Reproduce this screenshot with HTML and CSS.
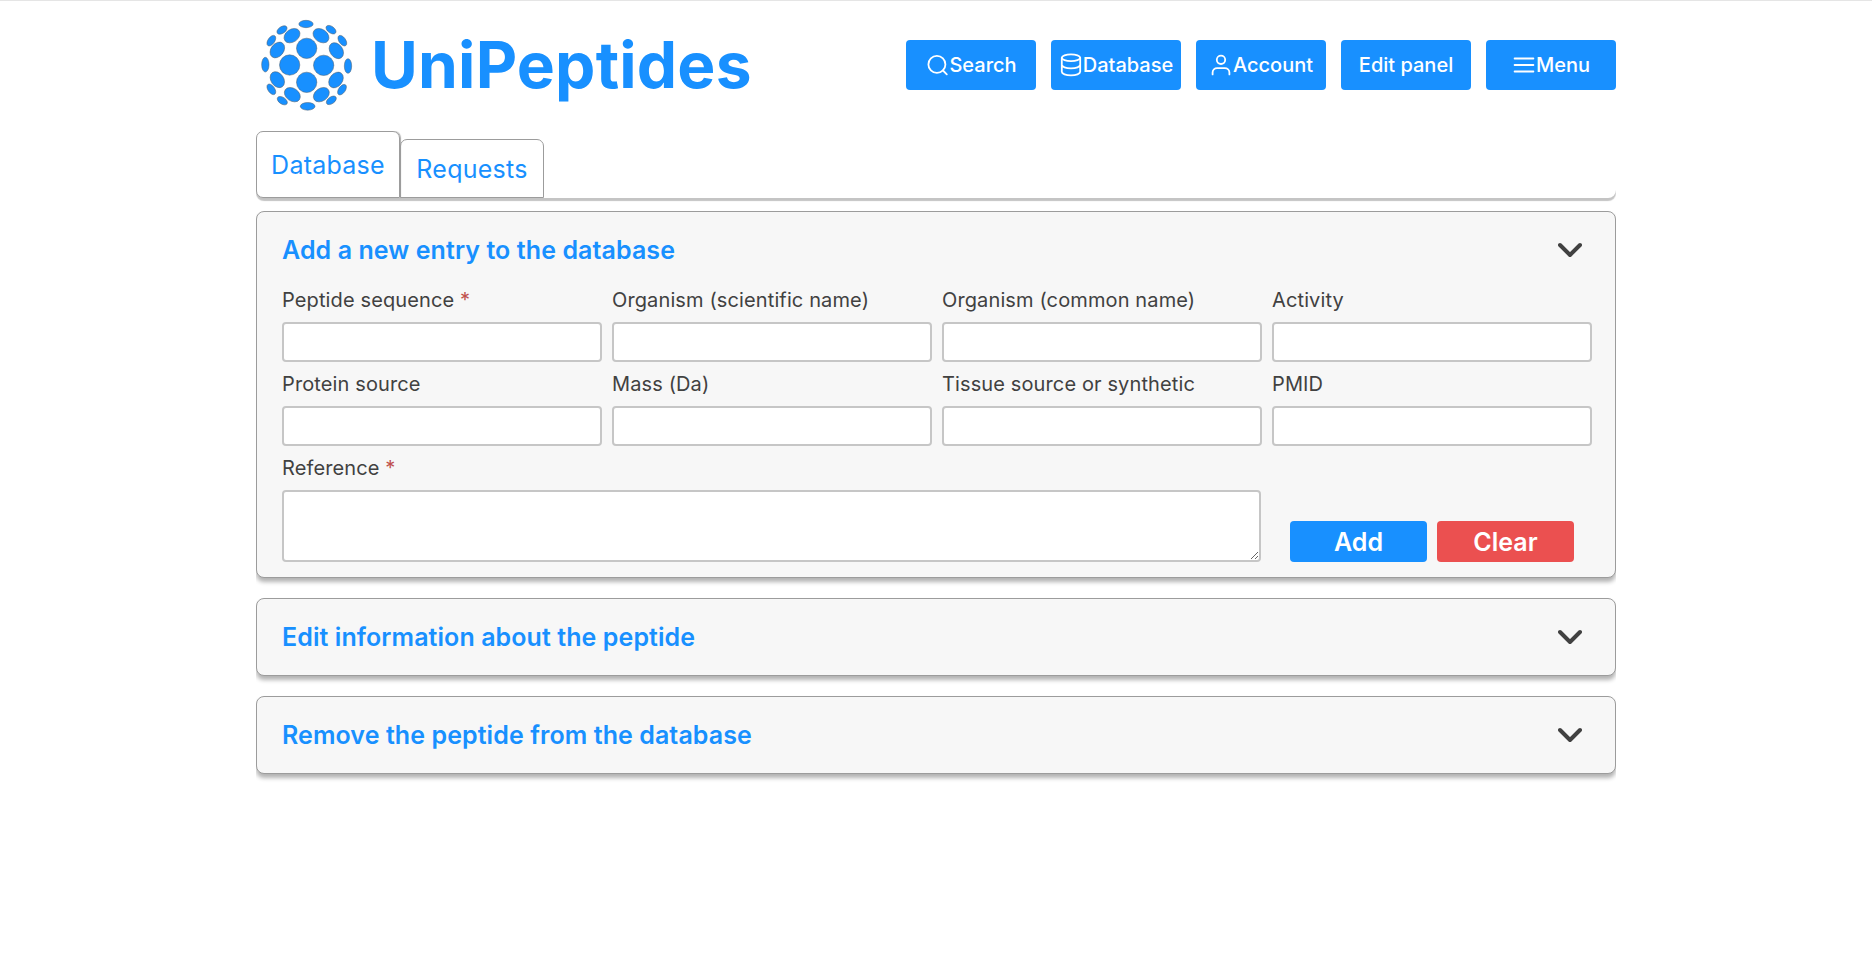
FILE: index.html
```html
<!DOCTYPE html>
<html lang="en">
<head>
<meta charset="utf-8">
<title>UniPeptides</title>
<link rel="stylesheet" href="styles.css">
</head>
<body>
<div class="page">
  <header class="header">
    <div class="brand">
      <svg class="logo" viewBox="18 42 306 306">
        <circle cx="170" cy="145" r="30.5"/><circle cx="119" cy="195" r="30.5"/><circle cx="221" cy="196" r="30.5"/><circle cx="170" cy="247" r="30.5"/>
        <ellipse cx="126" cy="107" rx="26" ry="19" transform="rotate(-35 126 107)"/>
        <ellipse cx="213" cy="107" rx="26" ry="19" transform="rotate(35 213 107)"/>
        <ellipse cx="82" cy="150" rx="26" ry="19" transform="rotate(-52 82 150)"/>
        <ellipse cx="259" cy="152" rx="26" ry="19" transform="rotate(55 259 152)"/>
        <ellipse cx="82" cy="239" rx="26" ry="19" transform="rotate(55 82 239)"/>
        <ellipse cx="127" cy="284" rx="26" ry="19" transform="rotate(35 127 284)"/>
        <ellipse cx="214" cy="284" rx="26" ry="19" transform="rotate(-35 214 284)"/>
        <ellipse cx="258" cy="240" rx="26" ry="19" transform="rotate(-52 258 240)"/>
        <ellipse cx="168" cy="72" rx="21.5" ry="11"/><ellipse cx="173" cy="319" rx="22" ry="11.5"/>
        <ellipse cx="46" cy="194" rx="11" ry="22"/><ellipse cx="294" cy="198" rx="11" ry="22"/>
        <ellipse cx="96" cy="90" rx="17" ry="10" transform="rotate(-34 96 90)"/>
        <ellipse cx="243" cy="89" rx="17" ry="10" transform="rotate(36 243 89)"/>
        <ellipse cx="64" cy="122" rx="18" ry="10" transform="rotate(-55 64 122)"/>
        <ellipse cx="277" cy="122" rx="18" ry="10" transform="rotate(55 277 122)"/>
        <ellipse cx="64" cy="268" rx="18" ry="10" transform="rotate(55 64 268)"/>
        <ellipse cx="97" cy="302" rx="17" ry="10" transform="rotate(34 97 302)"/>
        <ellipse cx="244" cy="301" rx="17" ry="10" transform="rotate(-36 244 301)"/>
        <ellipse cx="276" cy="269" rx="18" ry="10" transform="rotate(-55 276 269)"/>
      </svg>
      <h1 class="brand-name">UniPeptides</h1>
    </div>
    <nav class="nav">
      <button class="nav-button"><svg class="icon" viewBox="0 0 24 24"><circle cx="11.9" cy="11.4" r="8.5"/><path d="M18 17.5 21.8 21.3"/></svg>Search</button>
      <button class="nav-button"><svg class="icon" viewBox="0 0 24 24"><ellipse cx="12" cy="4.8" rx="9.2" ry="3.4"/><path d="M2.8 4.8v14c0 2 4.1 3.5 9.2 3.5s9.2-1.5 9.2-3.5v-14M2.8 11.8c0 2 4.1 3.5 9.2 3.5s9.2-1.5 9.2-3.5"/></svg>Database</button>
      <button class="nav-button"><svg class="icon" viewBox="0 0 24 24"><circle cx="12" cy="6.8" r="4.2"/><path d="M3.6 21.4v-1.8c0-2.6 2-4.4 4.6-4.4h7.6c2.6 0 4.6 1.8 4.6 4.4v1.8"/></svg>Account</button>
      <button class="nav-button">Edit panel</button>
      <button class="nav-button"><svg class="icon" viewBox="0 0 24 24"><path d="M2.6 5.5h18.8M2.6 12h18.8M2.6 18.5h18.8"/></svg>Menu</button>
    </nav>
  </header>

  <div class="tabs-clip">
    <div class="tabs">
      <div class="tab tab-active">Database</div>
      <div class="tab">Requests</div>
    </div>
  </div>

  <main class="panels">
    <section class="panel">
      <div class="panel-head"><h2 class="panel-title">Add a new entry to the database</h2><svg class="chevron" viewBox="0 0 24 16"><path d="m2 3 10 10L22 3"/></svg></div>
      <form class="form">
        <div class="fields">
          <label class="field"><span class="label">Peptide sequence <span class="required">*</span></span><input class="input"></label>
          <label class="field"><span class="label">Organism (scientific name)</span><input class="input"></label>
          <label class="field"><span class="label">Organism (common name)</span><input class="input"></label>
          <label class="field"><span class="label">Activity</span><input class="input"></label>
          <label class="field"><span class="label">Protein source</span><input class="input"></label>
          <label class="field"><span class="label">Mass (Da)</span><input class="input"></label>
          <label class="field"><span class="label">Tissue source or synthetic</span><input class="input"></label>
          <label class="field"><span class="label">PMID</span><input class="input"></label>
        </div>
        <div class="form-bottom">
          <label class="field reference"><span class="label">Reference <span class="required">*</span></span><textarea class="input textarea"></textarea></label>
          <div class="actions">
            <button type="button" class="action action-add">Add</button>
            <button type="button" class="action action-clear">Clear</button>
          </div>
        </div>
      </form>
    </section>
    <section class="panel">
      <div class="panel-head"><h2 class="panel-title">Edit information about the peptide</h2><svg class="chevron" viewBox="0 0 24 16"><path d="m2 3 10 10L22 3"/></svg></div>
    </section>
    <section class="panel">
      <div class="panel-head"><h2 class="panel-title">Remove the peptide from the database</h2><svg class="chevron" viewBox="0 0 24 16"><path d="m2 3 10 10L22 3"/></svg></div>
    </section>
  </main>
</div>
</body>
</html>
```
FILE: styles.css
```css
* { box-sizing: border-box; }
body {
  margin: 0;
  background: #fff;
  border-top: 1px solid #e5e5e5;
  color: #414141;
  font-family: Inter, "Liberation Sans", sans-serif;
}
h1, h2 { margin: 0; }
button { border: 0; padding: 0; font-family: inherit; }
.page { width: 1360px; margin: 0 auto; }

.header { height: 130px; padding-bottom: 2px; display: flex; justify-content: space-between; align-items: center; }
.brand { display: flex; align-items: center; gap: 13px; }
.logo { width: 102px; height: 102px; fill: #1890ff; stroke: #4d5c6b; stroke-width: 1.5; }
.brand-name { font-size: 64px; line-height: 78px; font-weight: 700; letter-spacing: .2px; color: #1890ff; }
.nav { display: flex; gap: 15px; }
.nav-button {
  width: 130px;
  height: 50px;
  display: flex;
  align-items: center;
  justify-content: center;
  border-radius: 4px;
  background: #1890ff;
  color: #fff;
  font-size: 20px;
  font-weight: 500;
}
.icon { width: 24px; height: 24px; flex: none; fill: none; stroke: #fff; stroke-width: 1.8; stroke-linecap: round; stroke-linejoin: round; }

.tabs-clip { height: 80px; overflow: hidden; }
.tabs {
  height: 67px;
  display: flex;
  align-items: flex-end;
  border-radius: 0 0 8px 8px;
  box-shadow: 0 3px 1px #c4c4c4;
}
.tab {
  width: 144px;
  height: 59px;
  display: flex;
  align-items: center;
  justify-content: center;
  border: 1px solid #9c9c9c;
  border-radius: 7px 7px 0 0;
  color: #1890ff;
  font-size: 25px;
  letter-spacing: .25px;
}
.tab-active { height: 67px; border-radius: 7px 7px 0 7px; box-shadow: 1px 0 1px #aaa; }

.panels { display: flex; flex-direction: column; gap: 20px; padding-bottom: 10px; overflow: hidden; }
.panel {
  padding: 0 23px 0 25px;
  background: #f7f7f7;
  border: 1px solid #9c9c9c;
  border-radius: 8px;
  box-shadow: 0 4px 4px rgba(0, 0, 0, .3);
}
.panel-head { height: 76px; display: flex; justify-content: space-between; align-items: center; padding-right: 10px; }
.panel-title { color: #1890ff; font-size: 25px; line-height: 30px; font-weight: 600; letter-spacing: .08px; }
.chevron { width: 24px; height: 16px; fill: none; stroke: #414141; stroke-width: 4; stroke-linecap: round; stroke-linejoin: round; }
.form { padding-bottom: 15px; }
.fields { display: grid; grid-template-columns: repeat(4, 320px); gap: 10px; }
.field { display: flex; flex-direction: column; gap: 10px; }
.label { font-size: 20px; line-height: 24px; letter-spacing: .12px; }
.required { color: #c0504d; }
.input {
  width: 100%;
  height: 40px;
  background: #fff;
  border: 2px solid #c6c6c6;
  border-radius: 4px;
  outline: 0;
}
.form-bottom { display: flex; align-items: flex-end; justify-content: space-between; padding: 10px 18px 0 0; }
.reference { width: 979px; }
.textarea { height: 72px; display: block; resize: both; }
.actions { display: flex; gap: 10px; }
.action { width: 137px; height: 41px; border-radius: 4px; color: #fff; font-size: 25px; font-weight: 600; }
.action-add { background: #1890ff; }
.action-clear { background: #eb5050; }
```
